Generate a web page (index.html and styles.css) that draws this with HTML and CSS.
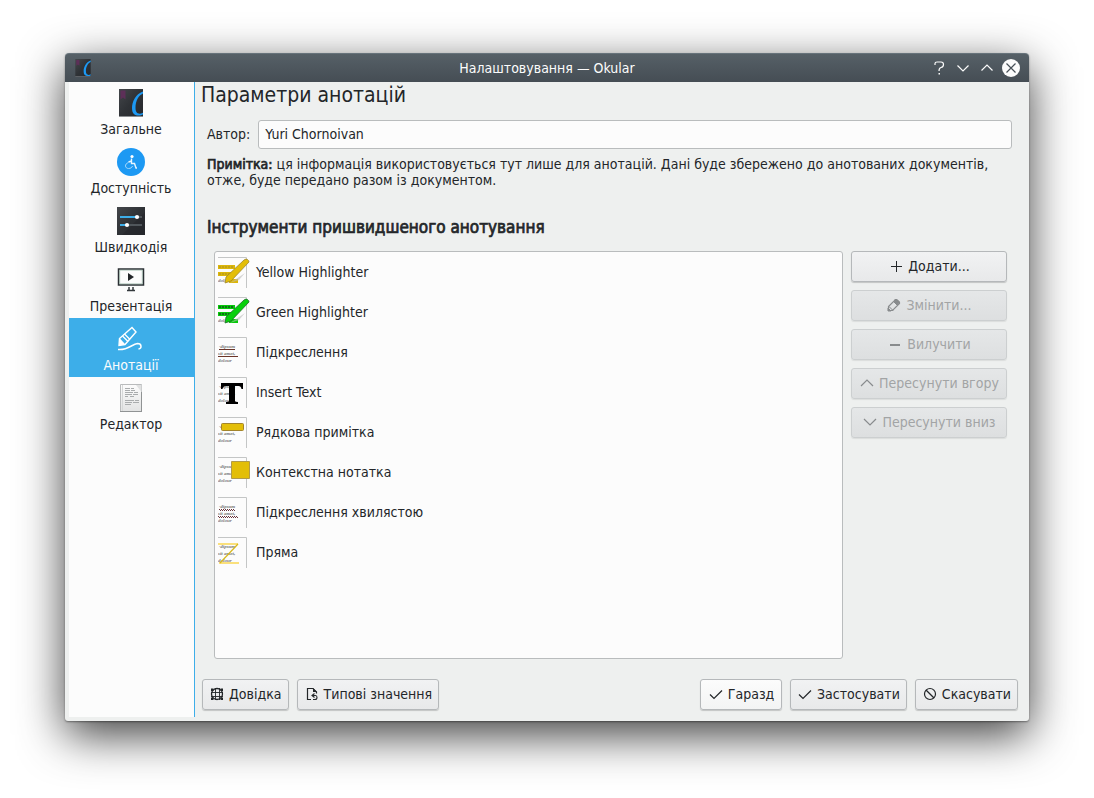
FILE: index.html
```html
<!DOCTYPE html>
<html lang="uk">
<head>
<meta charset="utf-8">
<title>Налаштовування — Okular</title>
<link rel="stylesheet" href="styles.css">
</head>
<body>
<svg class="defs" aria-hidden="true">
  <defs>
    <linearGradient id="dark" x1="0" y1="0" x2="1" y2="1"><stop offset="0" stop-color="#43464a"/><stop offset=".5" stop-color="#2f3236"/><stop offset="1" stop-color="#26282c"/></linearGradient>
    <linearGradient id="paper" x1="0" y1="0" x2="0" y2="1"><stop offset="0" stop-color="#fcfcfc"/><stop offset="1" stop-color="#e2e3e3"/></linearGradient>
    <symbol id="okular" viewBox="0 0 28 28">
      <rect x="2" y="0" width="24" height="28" fill="url(#dark)"/>
      <path d="M2 27.500h24" stroke="#8a8d90"/>
      <path d="M3.500 1.500h5v9l-2.500-2-2.500 2z" fill="#5d2f58"/>
      <path d="M26 2.500C18.500 5 15 13 15 19c0 6 3 7.500 6.500 7.500 2 0 3.500-.5 4.500-1v-1.700c-4 2-7.500 1-7.500-5C18.500 12 21.500 6.500 26 4.500z" fill="#1d99f3"/>
    </symbol>
    <symbol id="page" viewBox="0 0 32 32">
      <path d="M0 .5h28.500V31" fill="none" stroke="#c4c6c6"/>
      <g class="script"><text x="1" y="11">·dipsum</text><text x="0" y="18">sit amet,</text><text x="0" y="25">dolour</text></g>
    </symbol>
    <symbol id="up" viewBox="0 0 16 16"><path d="M2 11l6-6 6 6" fill="none" stroke="currentColor" stroke-width="1.200"/></symbol>
    <symbol id="down" viewBox="0 0 16 16"><path d="M2 5l6 6 6-6" fill="none" stroke="currentColor" stroke-width="1.200"/></symbol>
    <symbol id="tick" viewBox="0 0 16 16"><path d="M2 8.500l4 4 8-8" fill="none" stroke="currentColor" stroke-width="1.200"/></symbol>
  </defs>
</svg>
<main class="window">
  <header class="titlebar">
    <svg class="app-icon" aria-hidden="true"><use href="#okular"/></svg>
    <h1 class="caption">Налаштовування — Okular</h1>
    <div class="window-buttons">
      <button class="window-button" aria-label="Довідка"><svg viewBox="0 0 18 18"><path d="M5 6V4.500Q5 3 7 3h4q2.500 0 2.500 2.500T11 8.500Q9 9 9 12" fill="none" stroke="currentColor" stroke-width="1.200"/><path d="M8.500 14h1.500v1.500H8.500z" fill="currentColor"/></svg></button>
      <button class="window-button" aria-label="Мінімізувати"><svg viewBox="0 0 18 18"><path d="M3.500 6.500L9 12l5.500-5.500" fill="none" stroke="currentColor" stroke-width="1.200"/></svg></button>
      <button class="window-button" aria-label="Максимізувати"><svg viewBox="0 0 18 18"><path d="M3.500 11.500L9 6l5.500 5.500" fill="none" stroke="currentColor" stroke-width="1.200"/></svg></button>
      <button class="window-button" aria-label="Закрити"><svg viewBox="0 0 18 18"><circle cx="9" cy="9" r="9" fill="currentColor"/><path d="M4.500 4.500l9 9M13.500 4.500l-9 9" stroke="#475057" stroke-width="1.200"/></svg></button>
    </div>
  </header>
  <div class="body">
    <nav class="sidebar">
      <button class="section"><svg class="section-icon" aria-hidden="true"><use href="#okular"/></svg>Загальне</button>
      <button class="section"><svg class="section-icon" viewBox="0 0 28 28" aria-hidden="true"><circle cx="14" cy="14" r="14" fill="#1d99f3"/><circle cx="15" cy="8.500" r="1.600" fill="#fff"/><path d="M14.500 10.500v5h3l1.500 4.500h1M14.500 13l-3 1" fill="none" stroke="#e8f5fe" stroke-width="1.400"/><path d="M11.500 14.500c-4.500 1.500-3.500 6 0 6 2.200 0 3.500-1 4-2.500" fill="none" stroke="#a5d8fb"/></svg>Доступність</button>
      <button class="section"><svg class="section-icon" viewBox="0 0 28 28" aria-hidden="true"><rect width="28" height="28" fill="url(#dark)"/><path d="M28 5L5 28h23z" fill="#25272b" opacity=".6"/><path d="M3 10h22M3 18h22" stroke="#50565b" stroke-width="2"/><path d="M3 10h17M3 18h7" stroke="#3daee9" stroke-width="2"/><circle cx="20" cy="10" r="2.100" fill="#fff"/><circle cx="10" cy="18" r="2.100" fill="#fff"/></svg>Швидкодія</button>
      <button class="section"><svg class="section-icon" viewBox="0 0 28 28" aria-hidden="true"><path d="M1.500 3h25v16h-25z" fill="none" stroke="#2b3034" stroke-width="1.500"/><path d="M2.700 4.200h22.600v13.600H2.700z" fill="none" stroke="#78a08c" stroke-width=".5"/><path d="M11 7v8l6-4z" fill="#232629"/><path d="M12 21v3.500M16 21v3.500M10 24.500h8" fill="none" stroke="#33383c" stroke-width="1.500"/></svg>Презентація</button>
      <button class="section section-current" aria-current="page"><svg class="section-icon" viewBox="0 0 28 28" aria-hidden="true"><path d="M2 20.500l.5-7L15 2.500l4 4.500-11 12.500z" fill="none" stroke="#fff" stroke-width="1.400"/><path d="M3 13.500l5 5.500-6 2z" fill="#fff"/><path d="M5.500 11l5.500 5.500M7.500 9l5.500 5.500" stroke="#fff" stroke-width="1.300"/><path d="M1 24.500C11 25.500 15 19 20.500 18.500c4.500 0 4.500 5 1 5.500" fill="none" stroke="#fff" stroke-width="1.500"/></svg>Анотації</button>
      <button class="section"><svg class="section-icon" viewBox="0 0 28 28" aria-hidden="true"><path d="M3.500.5h21v27h-21z" fill="url(#paper)" stroke="#b9bbbc"/><path d="M3 27.500h22M24.500 8v19" stroke="#909394"/><path d="M5.500 1v26" stroke="#d6d8d8"/><path d="M19 1l5.500 7V1z" fill="#e0e1e1"/><path d="M8 4.500h5M14 4.500h3M8 6.500h5M14 6.500h4M8 8.500h8M17 8.500h4M8 10.500h7M16 10.500h5M8 12.500h3M13 12.500h4M8 16.500h9M18 16.500h4M8 18.500h7M16 18.500h6M8 20.500h6" stroke="#a9acad"/></svg>Редактор</button>
    </nav>
    <section class="content">
      <h2 class="page-title">Параметри анотацій</h2>
      <div class="page">
        <div class="author">
          <label class="author-label" for="author">Автор:</label>
          <input class="author-input" id="author" type="text" value="Yuri Chornoivan">
        </div>
        <p class="note"><strong class="note-lead">Примітка:</strong> ця інформація використовується тут лише для анотацій. Дані буде збережено до анотованих документів, отже, буде передано разом із документом.</p>
        <h3 class="tools-title">Інструменти пришвидшеного анотування</h3>
        <div class="tools">
          <ul class="tool-list">
            <li class="tool"><svg class="tool-icon" viewBox="0 0 32 30" aria-hidden="true"><use href="#page" width="32" height="32"/><path d="M0 8h17v4H0zM0 15h15v4H0zM11 22h9v4h-9z" fill="#dcb60a"/><path d="M1 10h15M1 17h10" stroke="#a48e2c" stroke-dasharray="2 1"/><path d="M27 16l-6 7-9 3z" fill="#bbb" opacity=".6"/><path d="M7 26l1-6L26 3q2-1.500 3.500-.5T31 5L13 24z" fill="#e3be08" stroke="#9d8630" stroke-width=".8"/></svg>Yellow Highlighter</li>
            <li class="tool"><svg class="tool-icon" viewBox="0 0 32 30" aria-hidden="true"><use href="#page" width="32" height="32"/><path d="M0 8h17v4H0zM0 15h15v4H0zM11 22h9v4h-9z" fill="#07c90b"/><path d="M1 10h15M1 17h10" stroke="#13531b" stroke-width="1.500" stroke-dasharray="2 1"/><path d="M27 16l-6 7-9 3z" fill="#bbb" opacity=".6"/><path d="M7 26l1-6L26 3q2-1.500 3.500-.5T31 5L13 24z" fill="#08d00c" stroke="#1c6b28" stroke-width=".8"/></svg>Green Highlighter</li>
            <li class="tool"><svg class="tool-icon" viewBox="0 0 32 30" aria-hidden="true"><use href="#page" width="32" height="32"/><path d="M1 12.500h16M0 19.500h20" stroke="#6b3529"/></svg>Підкреслення</li>
            <li class="tool"><svg class="tool-icon" viewBox="0 0 32 30" aria-hidden="true"><use href="#page" width="32" height="32"/><path d="M3 6h22v6h-1.500q-.5-3-3-3H17v15q0 1 3 1v2H8v-2q3 0 3-1V9H8Q5 9 4.500 12H3z" fill="#000"/></svg>Insert Text</li>
            <li class="tool"><svg class="tool-icon" viewBox="0 0 32 30" aria-hidden="true"><use href="#page" width="32" height="32"/><rect x="3.500" y="6.500" width="22" height="7" rx="1" fill="#e3be08" stroke="#a3842b"/></svg>Рядкова примітка</li>
            <li class="tool"><svg class="tool-icon" viewBox="0 0 32 30" aria-hidden="true"><use href="#page" width="32" height="32"/><path d="M13.500 4.500h18v17h-18z" fill="#e3be08" stroke="#b09a4c"/></svg>Контекстна нотатка</li>
            <li class="tool"><svg class="tool-icon" viewBox="0 0 32 30" aria-hidden="true"><use href="#page" width="32" height="32"/><path d="M1 12.500h16M0 19.500h20M2 13.500h16M1 20.500h20" fill="none" stroke="#68333a" stroke-dasharray="1 1"/></svg>Підкреслення хвилястою</li>
            <li class="tool"><svg class="tool-icon" viewBox="0 0 32 30" aria-hidden="true"><use href="#page" width="32" height="32"/><path d="M0 7h20M1 26h20" stroke="#fae07c" stroke-width="2"/><path d="M20 7L2 26" stroke="#d9b81c" stroke-width="1.200"/></svg>Пряма</li>
          </ul>
          <div class="tool-actions">
            <button class="button"><svg class="button-icon" viewBox="0 0 16 16" aria-hidden="true"><path d="M8.500 3v11M3 8.500h11" stroke="currentColor"/></svg>Додати...</button>
            <button class="button" disabled><svg class="button-icon" viewBox="0 0 16 16" aria-hidden="true"><path d="M2.500 13.500v-4l7-7h1l3 3v1l-7 7z" fill="none" stroke="currentColor" stroke-width="1.200"/><path d="M9 2.500h2L13.500 5 11 8 8 5z" fill="currentColor" stroke="currentColor"/><path d="M3 9.500l4 4M2 11v3h3z" fill="currentColor" stroke="currentColor"/></svg>Змінити...</button>
            <button class="button" disabled><svg class="button-icon" viewBox="0 0 16 16" aria-hidden="true"><path d="M3 9h10" stroke="currentColor" stroke-width="2"/></svg>Вилучити</button>
            <button class="button" disabled><svg class="button-icon" aria-hidden="true"><use href="#up"/></svg>Пересунути вгору</button>
            <button class="button" disabled><svg class="button-icon" aria-hidden="true"><use href="#down"/></svg>Пересунути вниз</button>
          </div>
        </div>
      </div>
      <footer class="footer">
        <button class="button"><svg class="button-icon" viewBox="0 0 16 16" aria-hidden="true"><circle cx="8" cy="8" r="5.500" fill="none" stroke="currentColor" stroke-width="1.300"/><path d="M6.500 2v12M10.500 2v12M2 6.500h12M2 10.500h12" stroke="currentColor" stroke-width=".9"/><path d="M2 2.500h2.500v2.500H2zM11.500 2.500H14v2.500h-2.500zM2 11.500h2.500V14H2zM11.500 11.500H14V14h-2.500z" fill="currentColor"/></svg>Довідка</button>
        <button class="button"><svg class="button-icon" viewBox="0 0 16 16" aria-hidden="true"><path d="M7 13.500H3.500v-11H9L12.500 6v1.500" fill="none" stroke="currentColor" stroke-width="1.200"/><path d="M9 2v4h4z" fill="currentColor"/><path d="M10.500 7.500L8 9.500l2.500 2M8 9.500h3.500q1.500 0 1.500 2t-2 2H9" fill="none" stroke="currentColor" stroke-width="1.100"/></svg>Типові значення</button>
        <span class="spacer"></span>
        <button class="button button-default"><svg class="button-icon" aria-hidden="true"><use href="#tick"/></svg>Гаразд</button>
        <button class="button"><svg class="button-icon" aria-hidden="true"><use href="#tick"/></svg>Застосувати</button>
        <button class="button"><svg class="button-icon" viewBox="0 0 16 16" aria-hidden="true"><circle cx="8" cy="8" r="5.500" fill="none" stroke="currentColor" stroke-width="1.200"/><path d="M4 4l8 8" stroke="currentColor" stroke-width="1.200"/></svg>Скасувати</button>
      </footer>
    </section>
  </div>
</main>
</body>
</html>
```
FILE: styles.css
```css
* {
  box-sizing: border-box;
}

body {
  display: flex;
  min-height: 100vh;
  margin: 0;
  padding: 53px 65px 77px;
  background: #fff;
  color: #232629;
  font: 14px/16px "DejaVu Sans Condensed", "DejaVu Sans", sans-serif;
}

button,
input {
  font: inherit;
  color: inherit;
}

h1,
h2,
h3,
p,
ul {
  margin: 0;
  padding: 0;
}

.defs {
  position: absolute;
  width: 0;
  height: 0;
}

.window {
  display: flex;
  flex: 1;
  flex-direction: column;
  min-width: 0;
  border-radius: 4px 4px 3px 3px;
  background: #eef0ef;
  box-shadow: 0 1px 2px rgba(0, 0, 0, 0.4), 0 14px 46px rgba(0, 0, 0, 0.76);
}

.titlebar {
  display: grid;
  grid-template-columns: 1fr auto 1fr;
  align-items: center;
  height: 29px;
  padding: 0 9px 1px;
  border-top: 1px solid #67737b;
  border-radius: 4px 4px 0 0;
  background: linear-gradient(#566067, #454d54);
  color: #fcfcfc;
}

.app-icon {
  width: 18px;
  height: 18px;
}

.caption {
  font-size: 14px;
  font-weight: normal;
}

.window-buttons {
  display: flex;
  justify-content: flex-end;
  gap: 6px;
}

.window-button {
  width: 18px;
  height: 18px;
  padding: 0;
  border: 0;
  background: none;
}

.window-button svg {
  display: block;
}

.body {
  display: flex;
  flex: 1;
}

.sidebar {
  flex: none;
  width: 126px;
  margin: 0 0 4px 4px;
  border-right: 1px solid #3daee9;
  background: #fcfcfc;
}

.section {
  display: flex;
  flex-direction: column;
  align-items: center;
  gap: 4px;
  width: 100%;
  height: 59px;
  padding: 7px 1px 0 0;
  border: 0;
  background: none;
}

.section-current {
  background: #3daee9;
  color: #fcfcfc;
}

.section-icon {
  width: 28px;
  height: 28px;
}

.content {
  display: flex;
  flex: 1;
  flex-direction: column;
  min-width: 0;
  padding: 0 11px 11px 6px;
}

.page-title {
  font-size: 21px;
  font-weight: normal;
  line-height: 26px;
}

.page {
  display: flex;
  flex: 1;
  flex-direction: column;
  padding: 12px 6px 20px;
}

.author {
  display: flex;
  align-items: center;
  gap: 8px;
}

.author-label {
  padding-bottom: 2px;
}

.author-input {
  flex: 1;
  height: 29px;
  padding: 0 6px 2px;
  border: 1px solid #b9bcbd;
  border-radius: 3px;
  background: #fcfcfc;
}

.note {
  margin-top: 7px;
}

.note-lead,
.tools-title {
  font-weight: normal;
  -webkit-text-stroke: 0.7px currentColor;
}

.tools-title {
  margin: 27px 0 12px;
  font-size: 17px;
  line-height: 24px;
}

.tools {
  display: flex;
  flex: 1;
  gap: 8px;
  padding: 0 5px 0 7px;
}

.tool-list {
  flex: 1;
  padding: 0 3px;
  border: 1px solid #b9bcbd;
  border-radius: 3px;
  background: #fcfcfc;
  list-style: none;
}

.tool {
  display: flex;
  align-items: center;
  gap: 6px;
  height: 40px;
}

.tool-icon {
  width: 32px;
  height: 30px;
  overflow: visible;
}

.script {
  fill: #777;
  font: italic bold 5px "Liberation Serif", serif;
}

.tool-actions {
  display: flex;
  flex: none;
  flex-direction: column;
  gap: 8px;
  width: 156px;
}

.button {
  display: flex;
  align-items: center;
  justify-content: center;
  gap: 4px;
  height: 31px;
  padding: 0 6px 2px;
  border: 1px solid #b5b8ba;
  border-radius: 3px;
  background: linear-gradient(#f1f2f3, #e8e9ea);
  box-shadow: 0 1px 1px rgba(0, 0, 0, 0.18);
  white-space: nowrap;
}

.button:disabled {
  border-color: #cccfd0;
  background: linear-gradient(#e5e7e8, #dddfe0);
  box-shadow: 0 1px 1px rgba(0, 0, 0, 0.08);
  color: #a2a4a5;
}

.button:disabled .button-icon {
  color: #888b8d;
}

.button-default {
  min-width: 82px;
  background: linear-gradient(#fcfcfc, #f3f4f4);
}

.button-icon {
  flex: none;
  width: 16px;
  height: 16px;
}

.footer {
  display: flex;
  gap: 8px;
  padding-left: 1px;
}

.spacer {
  flex: 1;
}
```
